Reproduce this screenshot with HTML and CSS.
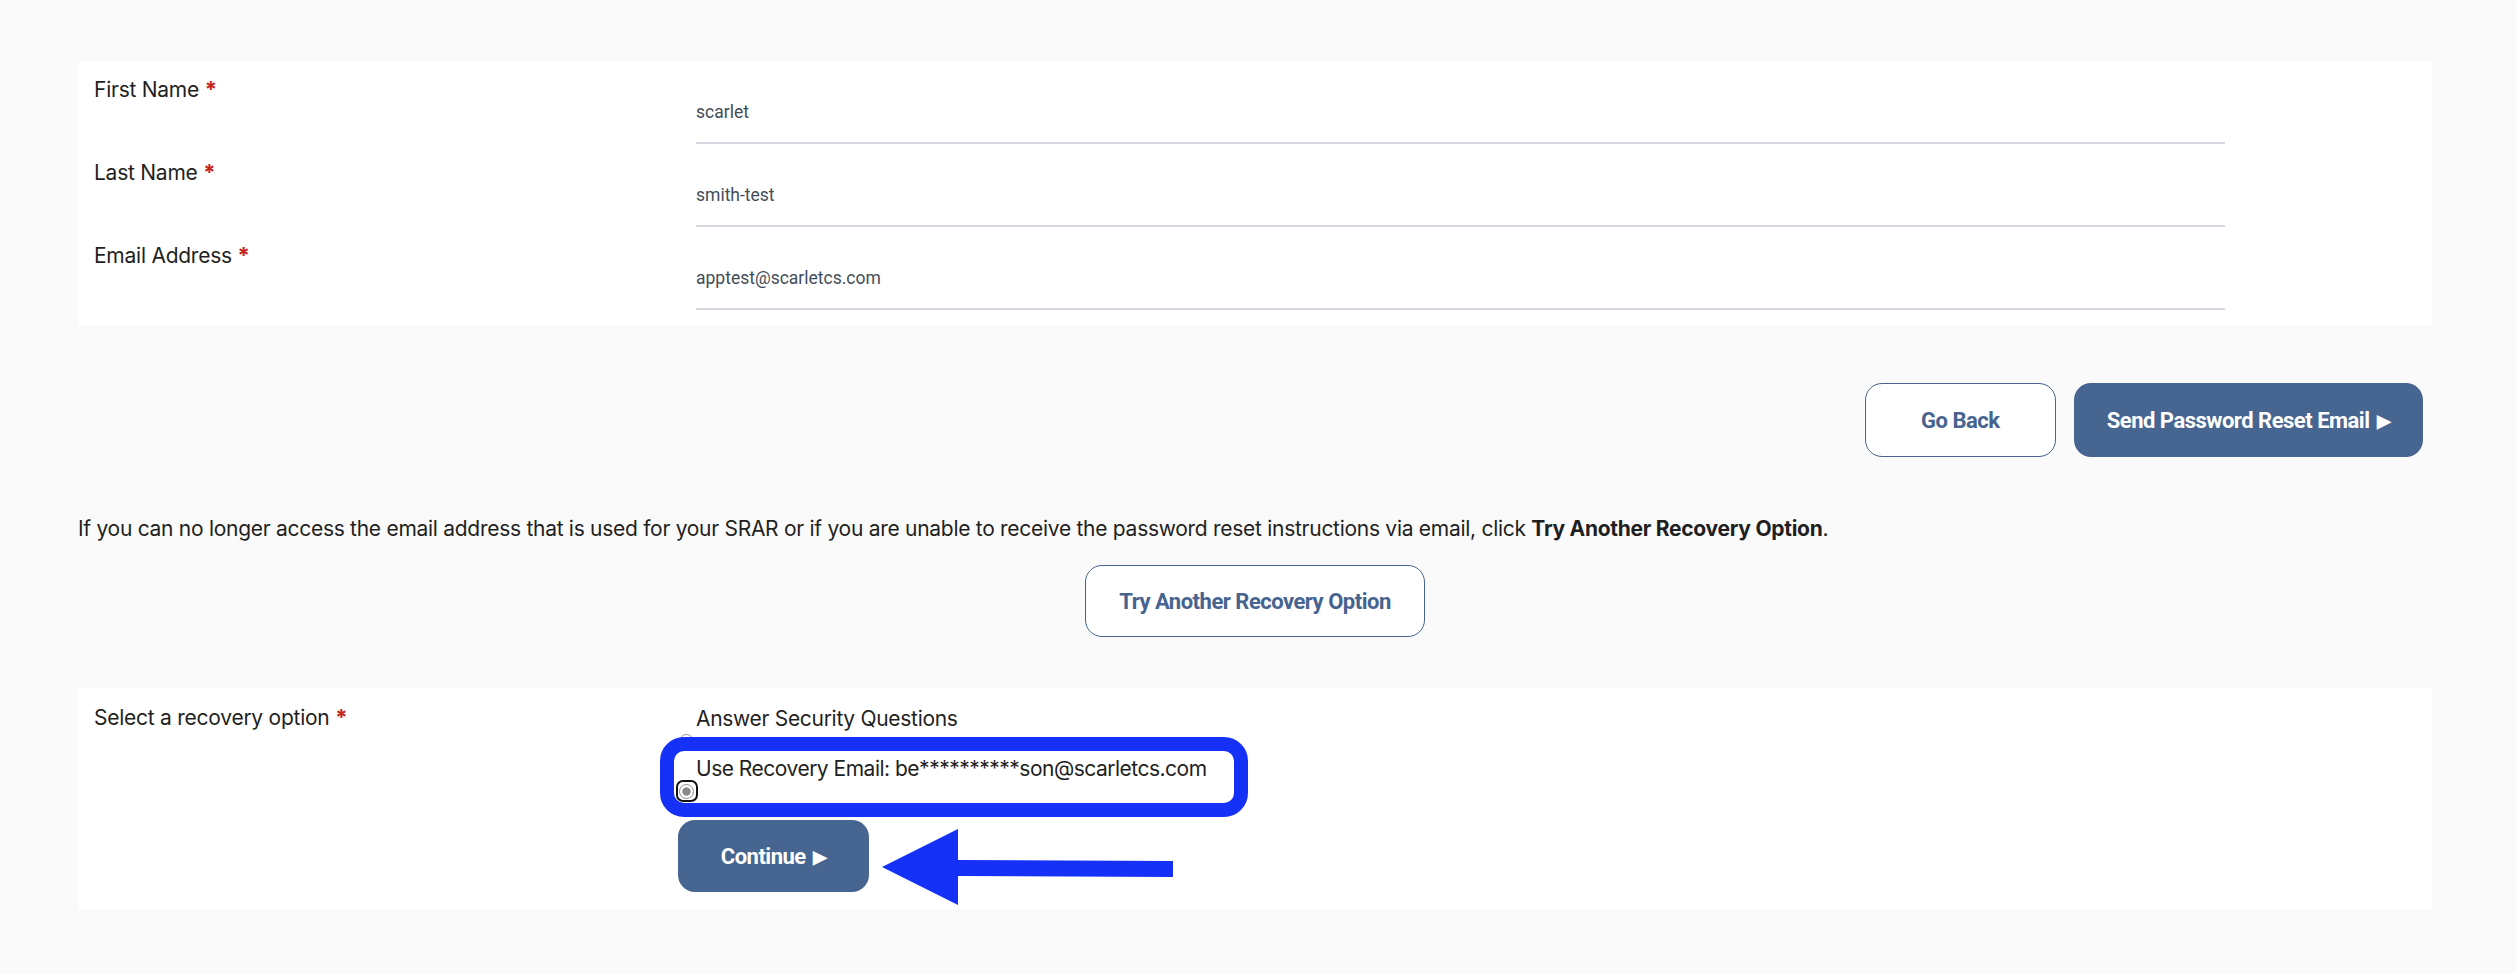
FILE: index.html
```html
<!DOCTYPE html>
<html lang="en">
<head>
<meta charset="utf-8">
<title>Reset Password</title>
<link rel="stylesheet" href="styles.css">
</head>
<body>
<main class="page">
  <section class="panel panel-fields">
    <div class="field-row">
      <div class="field-label">First Name <span class="req">*</span></div>
      <div class="field-value">scarlet</div>
    </div>
    <div class="field-row">
      <div class="field-label">Last Name <span class="req">*</span></div>
      <div class="field-value">smith-test</div>
    </div>
    <div class="field-row">
      <div class="field-label">Email Address <span class="req">*</span></div>
      <div class="field-value">apptest@scarletcs.com</div>
    </div>
  </section>

  <div class="actions">
    <button class="btn btn-outline btn-tall">Go Back</button>
    <button class="btn btn-primary btn-tall">Send Password Reset Email <span class="tri">&#9654;</span></button>
  </div>

  <p class="note">If you can no longer access the email address that is used for your SRAR or if you are unable to receive the password reset instructions via email, click <strong>Try Another Recovery Option</strong>.</p>

  <div class="center-row">
    <button class="btn btn-outline">Try Another Recovery Option</button>
  </div>

  <section class="panel panel-recovery">
    <div class="recovery-row">
      <div class="field-label">Select a recovery option <span class="req">*</span></div>
      <div class="options">
        <div class="option">
          <div class="option-text">Answer Security Questions</div>
          <div class="radio-line"><span class="radio"></span></div>
        </div>
        <div class="option">
          <div class="option-text option-text-long">Use Recovery Email: be**********son@scarletcs.com</div>
          <div class="radio-line"><span class="radio-focus"><span class="radio radio-checked"></span></span></div>
        </div>
        <button class="btn btn-primary btn-continue">Continue <span class="tri">&#9654;</span></button>
      </div>
    </div>
    <div class="highlight-box"></div>
    <svg class="arrow" width="300" height="80" viewBox="0 0 300 80">
      <polygon points="2,40 78,2 78,33 293,34 293,50 78,49 78,78" fill="#1531f8"/>
    </svg>
  </section>
</main>
</body>
</html>
```
FILE: styles.css
```css
* { box-sizing: border-box; }
html, body { margin: 0; padding: 0; }
body {
  background: #fafafa;
  font-family: "Inter", "Liberation Sans", sans-serif;
  color: #1f1f1f;
}
.page {
  width: 2354px;
  margin-left: 78px;
  padding-top: 61px;
}
.panel {
  background: #ffffff;
}
.panel-fields {
  padding: 0 0 15px 16px;
}
.field-row {
  display: flex;
}
.field-label {
  width: 602px;
  flex: none;
  padding-top: 16px;
  font-size: 21px;
  line-height: 25px;
  letter-spacing: -0.25px;
  color: #1f1f1f;
}
.req {
  color: #c4241c;
  font-weight: 700;
  font-size: 22px;
}
.field-value {
  width: 1529px;
  padding-top: 39.5px;
  padding-bottom: 19.5px;
  line-height: 22px;
  border-bottom: 2px solid #d3d9de;
  font-family: "Roboto", "Liberation Sans", sans-serif;
  font-size: 17.5px;
  color: #424d59;
}
.actions {
  display: flex;
  justify-content: flex-end;
  gap: 18px;
  margin-top: 58px;
  padding-right: 9px;
}
.btn {
  display: inline-flex;
  align-items: center;
  justify-content: center;
  min-width: 191px;
  height: 72px;
  padding: 0 33px;
  border-radius: 17px;
  font-family: "Roboto", "Liberation Sans", sans-serif;
  font-weight: 700;
  font-size: 22px;
  letter-spacing: -0.5px;
  cursor: pointer;
}
.btn-tall { height: 74px; }
.btn-outline {
  background: #ffffff;
  color: #46648f;
  border: 1.5px solid #46648f;
}
.btn-primary {
  background: #466591;
  color: #ffffff;
  border: none;
}
.tri {
  font-size: 18px;
  margin-left: 7px;
}
.note {
  margin: 59px 0 0 0;
  font-size: 21px;
  line-height: 25px;
  letter-spacing: -0.28px;
  color: #1f1f1f;
}
.note strong { font-weight: 700; }
.center-row {
  display: flex;
  justify-content: center;
  margin-top: 24px;
}
.panel-recovery {
  position: relative;
  margin-top: 51px;
  padding: 0 0 17px 16px;
}
.recovery-row {
  display: flex;
}
.recovery-row .field-label { padding-top: 17px; }
.options {
  padding-top: 18px;
  display: flex;
  flex-direction: column;
  align-items: flex-start;
}
.option-text {
  font-size: 21px;
  line-height: 25px;
  letter-spacing: -0.3px;
  color: #1f1f1f;
}
.option-text-long {
  letter-spacing: -0.5px;
}
.radio-line {
  height: 25px;
  margin-left: -17px;
  padding-top: 2.5px;
}
.radio {
  display: block;
  width: 15px;
  height: 15px;
  border-radius: 50%;
  border: 1.5px solid #9a9a9a;
  background: #fff;
}
.radio-focus {
  display: block;
  width: 22px;
  height: 22px;
  margin: -3.5px 0 0 -3.5px;
  padding: 1.5px;
  border: 2px solid #111;
  border-radius: 7px;
}
.radio-checked {
  border: 1.5px solid #8c8c8c;
  background: radial-gradient(circle, #8a8a8a 0 3.8px, #ffffff 4.6px);
}
.btn-continue {
  margin-top: 14px;
  margin-left: -18px;
}
.highlight-box {
  position: absolute;
  left: 582px;
  top: 49px;
  width: 588px;
  height: 80px;
  border: 14px solid #1531f8;
  border-radius: 24px;
  pointer-events: none;
}
.arrow {
  position: absolute;
  left: 802px;
  top: 139px;
  display: block;
}
```
